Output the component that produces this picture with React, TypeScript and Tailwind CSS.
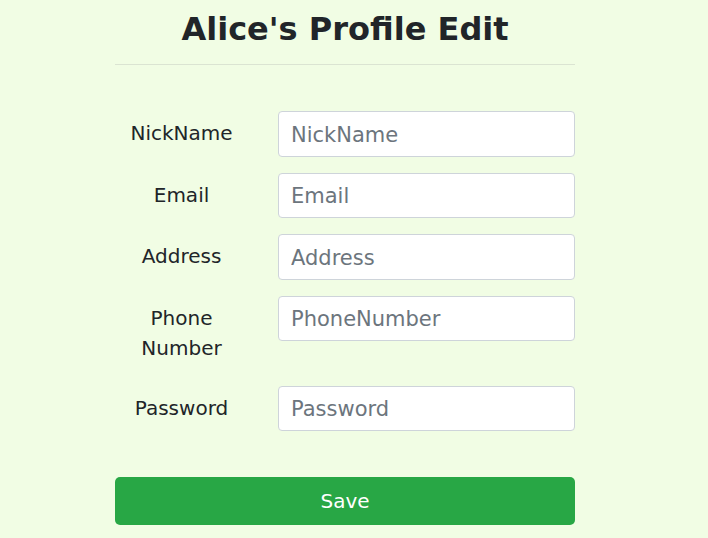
import React, { useState } from 'react';

const fields = [
  { key: 'nickname', label: 'NickName', placeholder: 'NickName', type: 'text' },
  { key: 'email', label: 'Email', placeholder: 'Email', type: 'email' },
  { key: 'address', label: 'Address', placeholder: 'Address', type: 'text' },
  { key: 'phone', label: 'Phone Number', placeholder: 'PhoneNumber', type: 'tel' },
  { key: 'password', label: 'Password', placeholder: 'Password', type: 'password' },
];

const App: React.FC = () => {
  const [values, setValues] = useState<Record<string, string>>({});

  return (
    <div className="min-h-screen w-full bg-[#f1fde4] font-['DejaVu_Sans',sans-serif] text-[#212529]">
      <div className="ml-[115px] w-[460px] pt-[10px]">
        <h2 className="text-center text-[32px] font-bold leading-[38px]">Alice's Profile Edit</h2>
        <hr className="mt-[16px] border-0 border-t border-[#dbe4d2]" />

        <form className="mt-[46px]" onSubmit={(e) => e.preventDefault()}>
          {fields.map((f) => (
            <div key={f.key} className="mb-[16px] flex items-start gap-[30px]">
              <label
                htmlFor={f.key}
                className="w-[133px] shrink-0 py-[7px] text-center text-[20px] leading-[30px] text-[#212529]"
              >
                {f.label}
              </label>
              <input
                id={f.key}
                type={f.type}
                placeholder={f.placeholder}
                value={values[f.key] ?? ''}
                onChange={(e) => setValues({ ...values, [f.key]: e.target.value })}
                className="h-[45.5px] w-[297px] rounded-[4px] border border-[#ced4da] bg-white px-3 pt-[2px] text-[21px] text-[#495057] outline-none placeholder:text-[#6c757d]"
              />
            </div>
          ))}

          <button
            type="submit"
            className="mt-[30px] h-[48px] w-full rounded-[5px] bg-[#28a745] text-[20px] leading-[30px] text-white"
          >
            Save
          </button>
        </form>
      </div>
    </div>
  );
};

export default App;
